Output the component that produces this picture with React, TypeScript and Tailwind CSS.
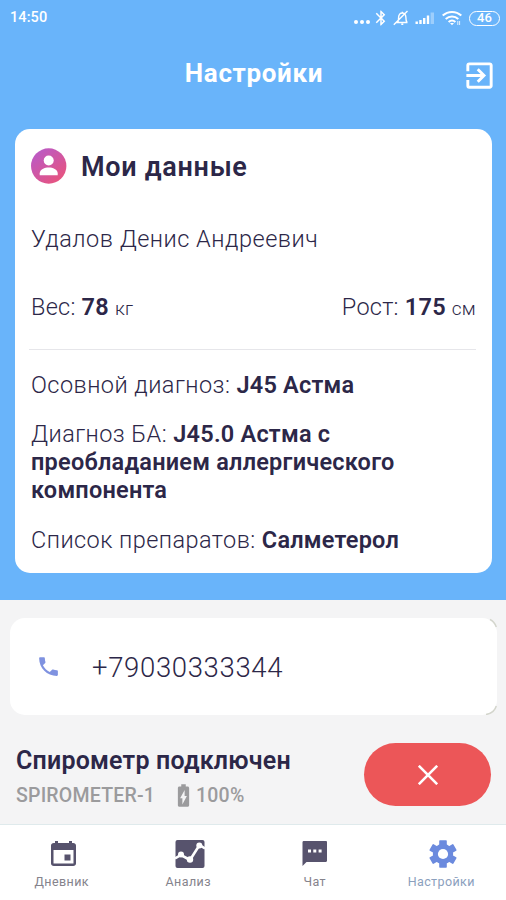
import { clsx } from "clsx";
import { MdBatteryChargingFull, MdBluetooth, MdExitToApp, MdPhone } from "react-icons/md";

function BellOffIcon() {
  return (
    <svg className="h-4 w-4" viewBox="0 0 16 16" fill="none" stroke="currentColor" strokeWidth="1.4">
      <path d="M3.5 12.5h11M4.7 12.300c.9-1.400.9-3 .9-4.800C5.600 4.700 7.200 3 9.300 3s3.600 1.700 3.600 4.500c0 2 .1 3.500 1.100 4.800M9.300 3V1.700M8.300 14.300h2M14.500 1 .8 14.800" />
    </svg>
  );
}

function SignalIcon() {
  return (
    <svg className="h-4 w-5" viewBox="0 0 20 16" fill="currentColor">
      <path d="M.5 11.500h2.400V14H.5zM4.300 10h2.400v4H4.300zM8 8h2.400v6H8zM11.800 5.500h2.400V14h-2.400z" />
      <path opacity=".35" d="M15.600 2.500H19V14h-3.400z" />
    </svg>
  );
}

function WifiIcon() {
  return (
    <svg className="h-4 w-5" viewBox="0 0 20 16" fill="none" stroke="currentColor" strokeWidth="2">
      <path d="M.7 5.600C6 .7 14 .7 19.300 5.600M3.700 8.900c3.600-3.300 9-3.300 12.600 0M6.600 12c2-1.800 4.800-1.800 6.800 0" />
      <path d="m8 13 2 2.300 2-2.300z" fill="currentColor" stroke="none" />
      <path d="M15.800 11v4M17.600 11v4" strokeWidth=".8" />
    </svg>
  );
}

function StatusBar() {
  return (
    <div className="flex h-9 items-center justify-between pr-[6px] pl-[10px] text-white">
      <span className="text-[14.5px] font-medium tracking-[0.1px]">14:50</span>
      <div className="flex items-center">
        <div className="mt-2 flex gap-[2px]">
          <span className="h-1 w-1 rounded-full bg-white" />
          <span className="h-1 w-1 rounded-full bg-white" />
          <span className="h-1 w-1 rounded-full bg-white" />
        </div>
        <MdBluetooth className="ml-[2px] h-[18px] w-[18px]" />
        <div className="ml-[3px]">
          <BellOffIcon />
        </div>
        <div className="ml-[6px] flex gap-[7px]">
          <SignalIcon />
          <WifiIcon />
        </div>
        <span className="ml-[7px] flex h-[15px] w-[31px] items-center justify-center rounded-full border-[1.5px] border-white text-[13px] font-medium">
          46
        </span>
      </div>
    </div>
  );
}

function UserBadge() {
  return (
    <svg className="h-9 w-9" viewBox="0 0 36 36">
      <defs>
        <linearGradient id="badge" x1="0" y1="0" x2="0.8" y2="1">
          <stop offset="0" stopColor="#b45bd0" />
          <stop offset="1" stopColor="#e9537c" />
        </linearGradient>
      </defs>
      <circle cx="17.700" cy="18" r="17.700" fill="url(#badge)" />
      <circle cx="17.700" cy="12.500" r="5" fill="#fff" />
      <path d="M8.700 27.300v-2c0-4 5-5.800 9-5.800s9 1.800 9 5.800v2z" fill="#fff" />
    </svg>
  );
}

function CalendarIcon() {
  return (
    <svg className="h-7 w-7" viewBox="0 0 28 28">
      <path
        d="M6 1h3v2h11V1h3v2h1.200C25.800 3 27 4 27 5.500v18c0 1.500-1.200 2.500-2.800 2.500H4.800C3.200 26 2 25 2 23.500v-18C2 4 3.200 3 4.800 3H6zM4.500 10v13.500h20V10z"
        fill="currentColor"
        fillRule="evenodd"
      />
      <path d="M15.500 14.500h6v6h-6z" fill="currentColor" />
    </svg>
  );
}

function AnalysisIcon() {
  return (
    <svg className="h-[30px] w-[30px]" viewBox="0 0 30 30">
      <rect x=".5" y="1" width="29" height="28" rx="2" fill="currentColor" />
      <path d="m0 19.500 6-3.500 9 5 9.500-15L30 9.500" stroke="#fff" strokeWidth="2.600" fill="none" />
      <g fill="#fff">
        <circle cx="6" cy="15.500" r="3" />
        <circle cx="15" cy="20.500" r="3.200" />
        <circle cx="24.300" cy="6.500" r="3" />
      </g>
    </svg>
  );
}

function ChatIcon() {
  return (
    <svg className="h-7 w-7" viewBox="0 0 28 28">
      <path
        d="M2.200 1h21.600C24.600 1 25 1.500 25 2.200v18.600c0 .7-.4 1.200-1.200 1.200H4.500L.5 26V2.200C.5 1.500 1.200 1 2.200 1z"
        fill="currentColor"
      />
      <path d="M6 9.500h3v3H6zM11.300 9.500h3v3h-3zM16.600 9.500h3v3h-3z" fill="#fff" />
    </svg>
  );
}

function GearIcon() {
  return (
    <svg className="h-7 w-7" viewBox="-14 -14 28 28" fill="currentColor">
      <circle r="10.200" />
      <rect x="-3.800" y="-13.800" width="7.600" height="27.600" rx=".8" />
      <rect x="-3.800" y="-13.800" width="7.600" height="27.600" rx=".8" transform="rotate(60)" />
      <rect x="-3.800" y="-13.800" width="7.600" height="27.600" rx=".8" transform="rotate(120)" />
      <circle r="5.100" fill="#fff" />
    </svg>
  );
}

const tabs = [
  { label: "Дневник", icon: <CalendarIcon /> },
  { label: "Анализ", icon: <AnalysisIcon /> },
  { label: "Чат", icon: <ChatIcon /> },
  { label: "Настройки", icon: <GearIcon />, active: true },
];

function TabBar() {
  return (
    <nav className="grid h-[76px] grid-cols-4 border-t border-[#dfeaec] bg-white">
      {tabs.map((tab) => (
        <div
          key={tab.label}
          className={clsx(
            "flex flex-col items-center pt-3",
            tab.active ? "text-[#6b8ade]" : "text-[#57536d]",
          )}
        >
          <div className="flex h-[34px] items-center">{tab.icon}</div>
          <span
            className={clsx(
              "mt-[3px] mr-[3px] text-[12.5px] leading-4 tracking-[0.4px]",
              tab.active ? "text-[#8ba0bd]" : "text-[#85838c]",
            )}
          >
            {tab.label}
          </span>
        </div>
      ))}
    </nav>
  );
}

export default function App() {
  return (
    <div className="flex h-[900px] w-[506px] flex-col overflow-hidden bg-[#f4f4f5] font-['Roboto',sans-serif] text-[#2c2748]">
      <div className="h-[600px] bg-[#69b4fa]">
        <StatusBar />
        <header className="grid h-[93px] grid-cols-[1fr_auto_1fr] items-start text-white">
          <h1 className="col-start-2 mt-[22px] pl-[2px] text-[26px] leading-[30px] font-bold tracking-[0.65px]">
            Настройки
          </h1>
          <MdExitToApp className="mt-[22px] mr-[9px] h-[35px] w-[35px] justify-self-end" />
        </header>

        <section className="mr-[14px] ml-[15px] h-[444px] rounded-[15px] bg-white px-4 pt-[19px] text-[23.5px] leading-[28px] font-light tracking-[0.45px]">
          <div className="flex items-center gap-[14px]">
            <UserBadge />
            <h2 className="mt-[3px] text-[27px] leading-[33px] font-semibold tracking-[0.7px]">Мои данные</h2>
          </div>
          <p className="mt-[41px] tracking-[0.5px]">Удалов Денис Андреевич</p>
          <div className="mt-10 flex justify-between tracking-[0.25px]">
            <p>
              Вес: <b className="font-semibold">78</b> <span className="text-[19px]">кг</span>
            </p>
            <p>
              Рост: <b className="font-semibold">175</b> <span className="text-[19px]">см</span>
            </p>
          </div>
          <hr className="mt-[26px] -ml-[2px] border-[#e6e6ea]" />
          <div className="flex flex-col gap-[22px] pt-[21px]">
            <p>
              Осовной диагноз: <b className="font-semibold tracking-[0.2px]">J45 Астма</b>
            </p>
            <p className="-mt-px">
              Диагноз БА:{" "}
              <b className="font-semibold tracking-[0.22px]">
                J45.0 Астма с преобладанием аллергического компонента
              </b>
            </p>
            <p>
              Список препаратов: <b className="font-semibold tracking-[0.22px]">Салметерол</b>
            </p>
          </div>
        </section>
      </div>

      <div className="relative mt-[18px] mr-[9px] ml-[10px] flex h-[97px] items-center rounded-[15px] bg-white">
        <MdPhone className="ml-[26px] h-[25px] w-[25px] text-[#7f92e0]" />
        <span className="mt-[2px] ml-[31px] text-[27.5px] leading-8 font-light tracking-[0.65px]">
          +79030333344
        </span>
        <svg
          className="absolute top-0 right-0 h-full w-4"
          viewBox="0 0 16 97"
          fill="none"
          stroke="#d3d5cc"
          strokeWidth="1.5"
        >
          <path d="M9 1.500c3 1.300 5 4 6.300 7.500M15.300 88c-1.300 4.500-5 7.700-10.300 8.500" />
        </svg>
      </div>

      <div className="flex flex-1 justify-between px-[15px]">
        <div className="mt-[31px] ml-[1px]">
          <h3 className="text-[25px] leading-[30px] font-semibold tracking-[0.2px]">Спирометр подключен</h3>
          <div className="mt-[6px] flex items-center text-[19.5px] leading-6 font-medium tracking-[0.2px] text-[#9b9b9d]">
            <span>SPIROMETER-1</span>
            <MdBatteryChargingFull className="ml-[15px] h-[27px] w-[27px]" />
            <span className="-ml-px">100%</span>
          </div>
        </div>
        <button className="mt-7 flex h-[63px] w-[127px] items-center justify-center rounded-full bg-[#ec5658] text-white">
          <svg className="h-5 w-5" viewBox="0 0 20 20" stroke="currentColor" strokeWidth="2.600">
            <path d="m.8.8 18.400 18.400M19.200.8.8 19.200" />
          </svg>
        </button>
      </div>

      <TabBar />
    </div>
  );
}
